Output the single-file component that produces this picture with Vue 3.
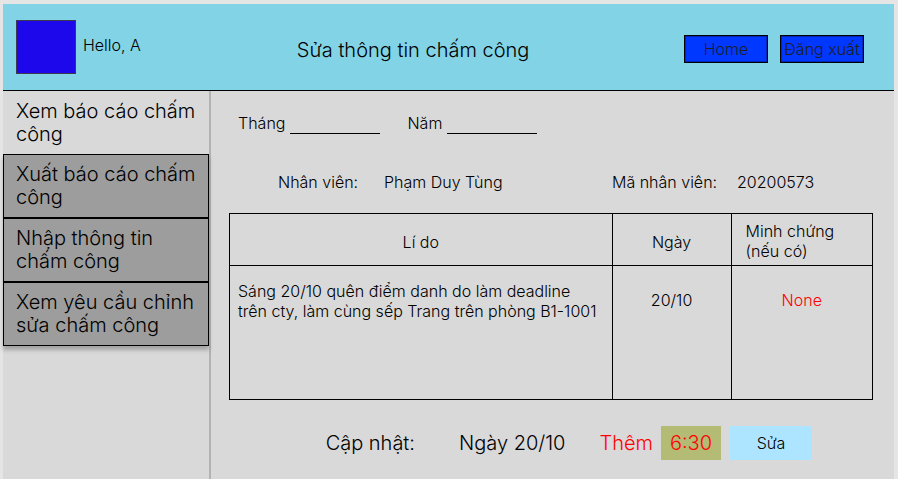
<script setup>
import { ref } from 'vue'

const menu = [
  { label: 'Xem báo cáo chấm công', active: true },
  { label: 'Xuất báo cáo chấm công' },
  { label: 'Nhập thông tin chấm công' },
  { label: 'Xem yêu cầu chỉnh sửa chấm công' },
]

const requests = [
  {
    reason: 'Sáng 20/10 quên điểm danh do làm deadline trên cty, làm cùng sếp Trang trên phòng B1-1001',
    date: '20/10',
    proof: 'None',
  },
]

const month = ref('')
const year = ref('')
const time = ref('6:30')
</script>

<template>
  <div class="page">
    <header class="header">
      <div class="user">
        <div class="avatar"></div>
        <span>Hello, A</span>
      </div>
      <h1 class="title">Sửa thông tin chấm công</h1>
      <div class="actions">
        <button class="nav-button" type="button">Home</button>
        <button class="nav-button" type="button">Đăng xuất</button>
      </div>
    </header>

    <div class="body">
      <nav class="sidebar">
        <a
          v-for="item in menu"
          :key="item.label"
          href="#"
          class="menu-item"
          :class="{ active: item.active }"
        >{{ item.label }}</a>
      </nav>

      <main class="content">
        <div class="filters">
          <label class="filter">Tháng <input v-model="month" type="text" /></label>
          <label class="filter">Năm <input v-model="year" type="text" /></label>
        </div>

        <div class="employee">
          <span>Nhân viên:</span>
          <span>Phạm Duy Tùng</span>
          <span>Mã nhân viên:</span>
          <span>20200573</span>
        </div>

        <table class="requests">
          <colgroup>
            <col class="col-reason" />
            <col class="col-date" />
            <col class="col-proof" />
          </colgroup>
          <thead>
            <tr>
              <th>Lí do</th>
              <th>Ngày</th>
              <th class="proof-head">Minh chứng<br />(nếu có)</th>
            </tr>
          </thead>
          <tbody>
            <tr v-for="row in requests" :key="row.date">
              <td class="reason">{{ row.reason }}</td>
              <td class="date">{{ row.date }}</td>
              <td class="proof">{{ row.proof }}</td>
            </tr>
          </tbody>
        </table>

        <form class="update" @submit.prevent>
          <span class="update-label">Cập nhật:</span>
          <span class="update-date">Ngày 20/10</span>
          <label class="update-add" for="time">Thêm</label>
          <input id="time" v-model="time" class="time" type="text" />
          <button class="save" type="submit">Sửa</button>
        </form>
      </main>
    </div>
  </div>
</template>

<style>
body {
  background: #e5e5e5;
}
</style>

<style scoped>
.page,
.page * {
  box-sizing: border-box;
}

.page {
  display: flex;
  flex-direction: column;
  min-height: calc(100vh - 4px);
  margin: 4px 4px 0 3px;
  background: #d9d9d9;
  color: #000;
  font-family: Inter, 'Liberation Sans', sans-serif;
  font-size: 16px;
  font-weight: 300;
  line-height: 20px;
}

button,
input {
  font: inherit;
  color: inherit;
}

.header {
  display: grid;
  grid-template-columns: 282fr auto 336fr;
  align-items: center;
  padding: 16px 30px 16px 13px;
  background: #82d3e6;
  border-bottom: 1px solid #000;
}

.user {
  display: flex;
  gap: 7px;
}

.user span {
  margin-top: 15px;
}

.avatar {
  width: 60px;
  height: 54px;
  background: #1c08eb;
  border: 1px solid #3d3a50;
}

.title {
  margin: 6px 0 0;
  font-size: 20px;
  font-weight: 300;
  line-height: 24px;
}

.actions {
  display: flex;
  justify-content: flex-end;
  gap: 12px;
  padding-top: 3px;
}

.nav-button {
  width: 84px;
  height: 28px;
  padding: 0;
  background: #0038ff;
  border: 1px solid #000;
  box-shadow: inset 0 0 0 1px #0028b4;
  color: #1e1e1e;
  white-space: nowrap;
}

.body {
  display: flex;
  flex: 1;
}

.sidebar {
  flex: 0 0 207px;
  border-right: 2px solid #b3b3b3;
}

.menu-item {
  display: block;
  width: 206px;
  height: 64px;
  padding: 8px 4px 8px 12px;
  background: #9d9d9d;
  border: 1px solid #000;
  box-shadow: 0 4px 4px rgba(0, 0, 0, 0.25);
  color: #000;
  font-size: 20px;
  line-height: 23px;
  text-decoration: none;
}

.menu-item.active {
  height: 63px;
  background: none;
  border-color: transparent;
  box-shadow: none;
}

.content {
  flex: 1;
  padding: 22px 21px 19px 18px;
}

.filters {
  display: flex;
  gap: 27px;
  padding-left: 9px;
}

.filter {
  display: flex;
  gap: 5px;
}

.filter input {
  width: 90px;
  height: 21px;
  padding: 0;
  background: none;
  border: 0;
  border-bottom: 1px solid #000;
}

.employee {
  display: grid;
  grid-template-columns: 106fr 228fr 125fr 136fr;
  margin: 38px 0 21px;
  padding-left: 49px;
}

.requests {
  width: 100%;
  border-collapse: collapse;
  table-layout: fixed;
}

.col-reason {
  width: 59.5%;
}

.col-date {
  width: 18.5%;
}

.col-proof {
  width: 22%;
}

.requests th,
.requests td {
  padding: 0;
  border: 1px solid #000;
  font-weight: 300;
  text-align: center;
}

.requests th {
  height: 52px;
  padding-top: 4px;
}

.requests td {
  height: 134px;
  vertical-align: top;
}

.requests .proof-head {
  padding: 2px 14px 0;
  text-align: left;
}

.requests .reason {
  padding: 15px 8px;
  text-align: left;
}

.requests .date,
.requests .proof {
  padding-top: 24px;
}

.requests .proof {
  color: #ff0000;
}

.update {
  display: flex;
  align-items: center;
  justify-content: flex-end;
  margin-top: 26px;
  padding-right: 61px;
  font-size: 20px;
  line-height: 24px;
}

.update-date {
  margin: 0 34px 0 44px;
}

.update-add,
.time {
  color: #ff0000;
}

.time {
  width: 60px;
  height: 34px;
  margin: 0 9px 0 8px;
  padding: 0;
  background: #b3bb74;
  border: 0;
  text-align: center;
}

.save {
  width: 82px;
  height: 34px;
  background: #ade4ff;
  border: 0;
  font-size: 16px;
}
</style>
